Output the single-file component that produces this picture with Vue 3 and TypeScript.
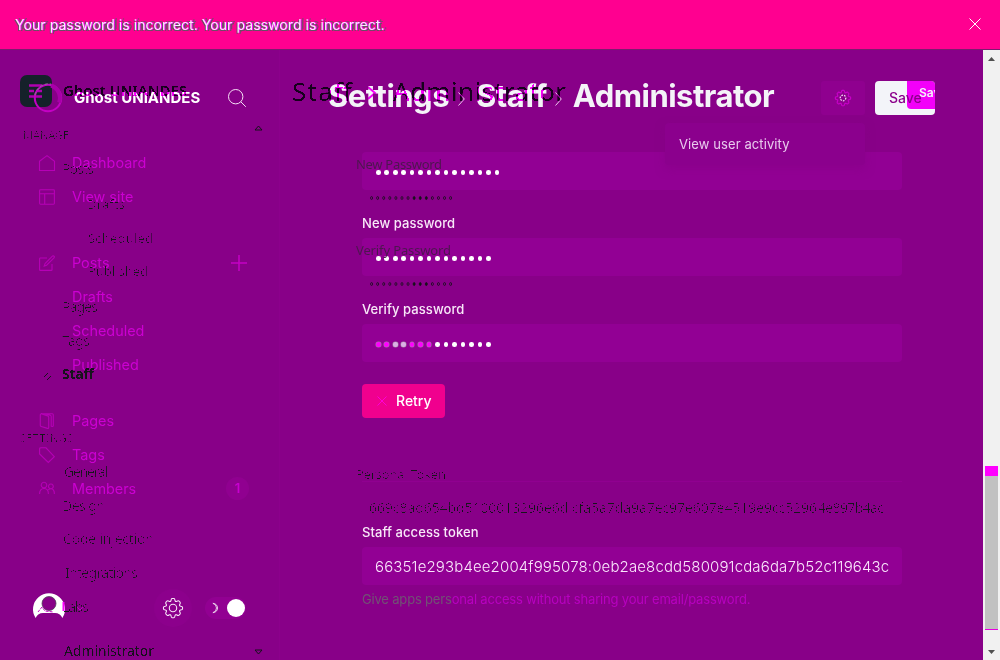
<script setup lang="ts">
interface NavItem { label: string; icon?: string; gap?: boolean; plus?: boolean; badge?: number }
interface Trace { t: string; x: number; y: number; w: number; s: number; b?: number }

const nav: NavItem[] = [
  { label: 'Dashboard', icon: 'home' },
  { label: 'View site', icon: 'layout' },
  { label: 'Posts', icon: 'edit', gap: true, plus: true },
  { label: 'Drafts' },
  { label: 'Scheduled' },
  { label: 'Published' },
  { label: 'Pages', icon: 'pages', gap: true },
  { label: 'Tags', icon: 'tag' },
  { label: 'Members', icon: 'members', badge: 1 },
]

const traces: Trace[] = [
  { t: 'MANAGE', x: 23, y: 139, w: 46, s: 11 },
  { t: 'Posts', x: 62, y: 174, w: 32, s: 14 },
  { t: 'Drafts', x: 87, y: 209, w: 38, s: 13 },
  { t: 'Scheduled', x: 88, y: 243, w: 65, s: 13 },
  { t: 'Published', x: 88, y: 276, w: 60, s: 13 },
  { t: 'Pages', x: 62, y: 312, w: 36, s: 14 },
  { t: 'Tags', x: 62, y: 346, w: 28, s: 14 },
  { t: 'SETTINGS', x: 20, y: 442, w: 53, s: 11 },
  { t: 'General', x: 64, y: 477, w: 44, s: 14 },
  { t: 'Design', x: 62, y: 511, w: 43, s: 14 },
  { t: 'Code injection', x: 63, y: 544, w: 91, s: 14 },
  { t: 'Integrations', x: 65, y: 578, w: 73, s: 14 },
  { t: 'Labs', x: 62, y: 612, w: 27, s: 14 },
  { t: 'Personal Token', x: 356, y: 479, w: 90, s: 13 },
  { t: '669c8ad654bd5100013296e6d:cfa5a7da9a7ec97e607e4519e9cc5296', x: 369, y: 513, w: 448, s: 14 },
  { t: '4e897b4ac', x: 818, y: 513, w: 66, s: 14 },
]

const headings: Trace[] = [
  { t: 'Ghost UNIANDES', x: 63, y: 96, w: 124, s: 15, b: 600 },
  { t: 'Staff', x: 292, y: 101, w: 60, s: 26 },
  { t: 'Administrator', x: 393, y: 101, w: 173, s: 26 },
]
</script>

<template>
  <div class="screen">
    <div class="alert">
      <span class="alert-text">Your password is incorrect. Your password is incorrect.</span>
      <svg class="close" viewBox="0 0 12 12"><path d="M.5.5l11 11M11.5.5l-11 11" /></svg>
    </div>

    <div class="body">
      <aside>
        <div class="brand">
          <svg class="logo" viewBox="0 0 48 44">
            <rect x="0" y="0" width="32" height="32" rx="7" fill="#15212a" />
            <path d="M9 10.500h13M9 16h5M16 16h6M9 21.500h13" stroke="#b000b0" stroke-width="2.500" fill="none" />
            <circle cx="28" cy="23" r="13.200" stroke="#c400c4" stroke-width="2" fill="none" />
            <path d="M31 10.500a13 13 0 0 1 8 17" stroke="#a800a8" stroke-width="4" fill="none" />
            <path d="M15 20a14 14 0 0 1 16-11" stroke="#83808b" stroke-width="1" stroke-dasharray="3 2" fill="none" />
          </svg>
          <span class="brand-name">Ghost UNIANDES</span>
          <svg class="search" viewBox="0 0 18 18"><circle cx="7.7" cy="7.7" r="7.2" /><path d="M12.8 12.8l5 5" /></svg>
        </div>

        <nav>
          <div v-for="n in nav" :key="n.label" class="row" :class="{ gap: n.gap }">
            <svg class="icon" viewBox="0 0 16 16">
              <path v-if="n.icon === 'home'" d="M.5 6.2L8 .6l7.5 5.6v9.3H.5z" />
              <path v-else-if="n.icon === 'layout'" d="M1.5.8h13q.9 0 .9.9v12.6q0 .9-.9.9h-13q-.9 0-.9-.9V1.700q0-.9.9-.9zM.6 4.700h14.800M5.700 4.700v10.500" />
              <path v-else-if="n.icon === 'edit'" d="M8 3H1.300q-.7 0-.7.7v11q0 .7.7.7h11q.7 0 .7-.7V9M6 8.700L13.400 1.200q.8-.8 1.600 0t0 1.600L7.600 10.200l-2.400.8z" />
              <path v-else-if="n.icon === 'pages'" d="M12.300 13.500h1q1 0 1-1V1.700q0-1-1-1h-11q-1 0-1 1v10.500q0 1 1 1.300l6.200 1.900q1.200.3 1.200-1V4.200q0-1-1-1.300L2 .8M6 .7l5 1.400q1.200.4 1.200 1.500v10" />
              <path v-else-if="n.icon === 'tag'" d="M.6 2v5l8.700 8.400 6-5.700L7 .8 2 .7Q.6.700.6 2z" />
              <path v-else-if="n.icon === 'members'" d="M5 1.300a2.800 2.800 0 1 0 .01 0zM11.900 3a2.400 2.400 0 1 0 .01 0zM.6 13q0-5.500 4.500-5.500 4.300 0 4.300 5.500M9.300 8.900q1-1.200 2.600-1.200 3.500 0 3.500 5.300" />
            </svg>
            <span class="label">{{ n.label }}</span>
            <svg v-if="n.plus" class="plus" viewBox="0 0 16 16"><path d="M8 0v16M0 8h16" /></svg>
            <span v-if="n.badge" class="badge">{{ n.badge }}</span>
          </div>
        </nav>

        <div class="foot">
          <svg class="avatar" viewBox="0 0 32 32">
            <path d="M2.600 26A16 16 0 1 1 29.400 26Q27 21 22 21H10Q5 21 2.600 26z" fill="#fff" />
            <circle cx="16" cy="11.500" r="7" fill="#880088" stroke="#52405c" stroke-width=".8" />
            <path d="M5 20l4-5 3 4 8 1" stroke="#c800c8" stroke-dasharray="3 1" fill="none" />
            <path d="M30.500 10v9" stroke="#f0f" stroke-width="2" />
          </svg>
          <svg class="chev" viewBox="0 0 10 6"><path d="M.5.500L5 5 9.500.500" /></svg>
          <span class="gear-wrap">
            <svg class="gear" viewBox="0 0 20 20">
              <path d="M8 2.500Q8.300.5 9 .5h2q.7 0 1 2l.5.900 1 .1q1.700-1.100 2.300-.6l1.400 1.400q.5.600-.6 2.300v1l1 .6q1.900.2 1.900 1v1.800q0 .7-1.900 1l-1 .6v1q1.100 1.700.6 2.300l-1.400 1.400q-.6.500-2.300-.6l-1 .1-.5.900q-.3 2-1 2H9q-.7 0-1-2l-.5-.9-1-.1q-1.700 1.100-2.300.6l-1.400-1.400q-.5-.6.600-2.300v-1l-1-.6Q.5 11.700.5 11V9.200q0-.8 1.900-1l1-.6v-1Q2.300 4.900 2.800 4.300l1.400-1.400q.6-.5 2.300.6l1-.1z" />
              <circle cx="10" cy="10" r="3.700" />
            </svg>
          </span>
          <span class="toggle">
            <svg class="moon" viewBox="0 0 10 12"><path d="M1 .800a5.200 5.200 0 1 1 0 10.400Q5 10 5 6T1 .800z" /></svg>
            <i class="knob"></i>
          </span>
        </div>
      </aside>

      <main>
        <header>
          <h1>
            <span>Settings</span>
            <svg class="sep" viewBox="0 0 7 14"><path d="M.5.500L6.300 7 .5 13.500" /></svg>
            <span>Staff</span>
            <svg class="sep second" viewBox="0 0 7 14"><path d="M.5.500L6.300 7 .5 13.500" /></svg>
            <span>Administrator</span>
          </h1>
          <div class="actions">
            <div class="gear-btn">
              <svg class="gear small" viewBox="0 0 20 20">
                <path d="M8 2.500Q8.300.5 9 .5h2q.7 0 1 2l.5.900 1 .1q1.700-1.100 2.300-.6l1.400 1.400q.5.600-.6 2.300v1l1 .6q1.900.2 1.900 1v1.800q0 .7-1.900 1l-1 .6v1q1.100 1.700.6 2.300l-1.400 1.400q-.6.500-2.300-.6l-1 .1-.5.900q-.3 2-1 2H9q-.7 0-1-2l-.5-.9-1-.1q-1.700 1.100-2.300.6l-1.400-1.400q-.5-.6.600-2.300v-1l-1-.6Q.5 11.700.5 11V9.200q0-.8 1.900-1l1-.6v-1Q2.300 4.900 2.800 4.300l1.400-1.400q.6-.5 2.300.6l1-.1z" />
                <circle class="hub" cx="10" cy="10" r="3.500" />
              </svg>
              <div class="menu">View user activity</div>
            </div>
            <div class="save">Save<span class="save-over">Save</span></div>
          </div>
        </header>

        <section>
          <div class="input dots first"><i v-for="i in 15" :key="i"></i></div>
          <label>New password</label>
          <div class="input dots"><i v-for="i in 14" :key="i"></i></div>
          <label>Verify password</label>
          <div class="input dots worn"><i v-for="i in 14" :key="i"></i></div>
          <button>
            <svg viewBox="0 0 10 10"><path d="M.5.500l9 9M9.500.500l-9 9" /></svg>
            <span>Retry</span>
          </button>
          <hr />
          <label class="token-label">Staff access token</label>
          <div class="input"><span class="token">66351e293b4ee2004f995078:0eb2ae8cdd580091cda6da7b52c119643cd</span></div>
          <p><span class="dim">Give apps pers</span>onal access without sharing your email/password.</p>
        </section>
      </main>

      <div class="scroll">
        <svg viewBox="0 0 7 4"><path d="M0 4L3.500 0 7 4z" /></svg>
        <div class="thumb"></div>
        <svg viewBox="0 0 7 4"><path d="M0 0h7L3.500 4z" /></svg>
      </div>
    </div>

    <svg class="traces" viewBox="0 0 1000 660" width="1000" height="660">
      <defs>
        <filter id="crisp" filterUnits="userSpaceOnUse" x="0" y="0" width="1000" height="660">
          <feComponentTransfer><feFuncA type="linear" slope="9" intercept="-7.300" /></feComponentTransfer>
        </filter>
        <filter id="softer" filterUnits="userSpaceOnUse" x="0" y="0" width="1000" height="660">
          <feComponentTransfer><feFuncA type="linear" slope="6" intercept="-2.600" /></feComponentTransfer>
        </filter>
      </defs>
      <g filter="url(#crisp)">
        <text v-for="(g, i) in traces" :key="i" :x="g.x" :y="g.y" :font-size="g.s" :textLength="g.w">{{ g.t }}</text>
      </g>
      <g filter="url(#softer)">
        <text v-for="h in headings" :key="h.t" :x="h.x" :y="h.y" :font-size="h.s" :font-weight="h.b ?? 400" :textLength="h.w">{{ h.t }}</text>
        <text x="62" y="379" font-size="14" font-weight="700" textLength="32">Staff</text>
        <text x="64" y="656" font-size="14" textLength="90">Administrator</text>
      </g>
      <g class="faint">
        <text x="356" y="169" font-size="13" textLength="86">New Password</text>
        <text x="356" y="255" font-size="13" textLength="95">Verify Password</text>
      </g>
      <g class="masked">
        <template v-for="y in [198, 284]" :key="y">
          <ellipse v-for="i in 14" :key="i" :class="{ solid: i > 7 && i < 11 }" :cx="365.500 + i * 6.080" :cy="y" rx="1" ry="1.500" />
        </template>
      </g>
      <path class="carets" d="M255 130l3.500-4 3.500 4zM255 650h7l-3.500 4zM44 377l4-4M47 380l4-4" />
    </svg>
    <svg class="traces tint" viewBox="0 0 1000 660" width="1000" height="660" aria-hidden="true">
      <g filter="url(#softer)">
        <text v-for="h in headings" :key="h.t" :x="h.x" :y="h.y" :font-size="h.s" :font-weight="h.b ?? 400" :textLength="h.w">{{ h.t }}</text>
      </g>
      <path d="M368 87l7 6-7 6" />
    </svg>
  </div>
</template>

<style>
html, body { margin: 0; overflow: hidden; }
</style>

<style scoped>
* { box-sizing: border-box; }
.screen { position: relative; width: 1000px; height: 660px; overflow: hidden; background: #880088; font-family: Inter, "Liberation Sans", sans-serif; display: flex; flex-direction: column; }
svg { fill: none; overflow: visible; flex: none; }
.alert { height: 50px; flex: none; background: #ff0090; display: flex; align-items: center; justify-content: space-between; padding: 0 19px 1px 15px; border-bottom: 1px solid #7c1a70; }
.alert-text { font-size: 14px; font-weight: 400; color: #ffe8ff; text-shadow: 1px 0 0 #f0f, 2px 1px 0 #675064, -1px 1px 0 #675064, 3px -1px 0 #8a4070; letter-spacing: .07px; }
.close { width: 12px; height: 12px; stroke: #fff; stroke-width: 1; }
.body { flex: 1; display: flex; min-height: 0; }
aside { width: 280px; border-right: 1px solid #8c008c; display: flex; flex-direction: column; flex: none; }
.brand { display: flex; align-items: center; height: 95px; padding: 0 33px 0 20px; }
.logo { width: 48px; height: 44px; margin-top: -1px; }
.brand-name { position: relative; z-index: 1; flex: 1; margin-left: 6px; color: #fff; font-weight: 700; font-size: 15px; letter-spacing: 0; white-space: nowrap; }
.search { width: 18px; height: 18px; stroke: #f5dff5; stroke-width: 1; margin-top: 1px; }
nav { display: flex; flex-direction: column; }
.row { display: flex; align-items: center; height: 34px; padding: 0 31px 0 39px; }
.row.gap { margin-top: 32px; }
.row.gap:nth-child(7) { margin-top: 22px; }
.icon { width: 16px; height: 16px; stroke: #b600b6; stroke-width: 1.1; margin-top: 2px; }
.label { flex: 1; margin-left: 17px; color: #cc00d2; font-size: 14.400px; font-weight: 400; }
.plus { width: 16px; height: 16px; stroke: #c400c4; stroke-width: 1.500; margin-right: 1px; margin-top: 2px; }
.badge { width: 23px; height: 23px; border-radius: 50%; background: #900090; color: #c800d0; font-size: 13px; font-weight: 600; display: grid; place-items: center; margin-right: -1px; }
.foot { margin-top: auto; height: 104px; display: flex; align-items: center; padding: 0 32px 0 33px; }
.avatar { width: 32px; height: 32px; margin-top: 0; }
.chev { width: 10px; height: 6px; margin-left: 10px; stroke: #c000c0; }
.gear-wrap { width: 38px; height: 38px; border-radius: 50%; background: #8c008c; margin-left: 69px; display: grid; place-items: center; }
.gear { width: 20px; height: 20px; stroke: #f6e4f6; stroke-width: 1.1; }
.gear.small { width: 16px; height: 16px; stroke: #c800c8; stroke-width: 1.500; }
.gear .hub { stroke: #f5dff5; stroke-dasharray: 2 1.500; }
.toggle { width: 41px; height: 22px; border-radius: 11px; background: #920092; margin-left: 13px; flex: none; display: flex; align-items: center; justify-content: space-between; padding: 0 1px 0 7px; }
.moon { width: 9px; height: 12px; stroke: #eedcee; }
.knob { width: 18px; height: 18px; border-radius: 50%; background: #fff; }
main { width: 703px; flex: none; padding-left: 48px; }
header { display: flex; justify-content: space-between; height: 102px; padding: 31px 48px 0 0; }
h1 { position: relative; z-index: 1; margin: -2px 0 0; height: 32px; display: flex; align-items: center; font-size: 31px; font-weight: 700; letter-spacing: -.5px; color: #f4f3f8; white-space: nowrap; }
.sep { width: 7px; height: 14px; stroke: #eec8ee; margin: 7px 11px 0 9px; }
.second { margin: 7px 11px 0 8px; }
.actions { display: flex; gap: 10px; }
.gear-btn { position: relative; width: 44px; height: 34px; border-radius: 3px; background: #8f008f; display: grid; place-items: center; }
.menu { position: absolute; top: 42px; right: 0; width: 200px; height: 42px; border-radius: 4px; background: #8b008d; box-shadow: 0 4px 10px rgba(134, 0, 134, .5); color: #e9cbee; font-size: 13px; line-height: 43px; padding-left: 14px; letter-spacing: .1px; }
.save { position: relative; width: 60px; height: 34px; border-radius: 4px; background: #f3f4f9; color: #8b008b; font-size: 14px; font-weight: 500; line-height: 34px; padding-left: 14px; overflow: hidden; }
.save-over { position: absolute; left: 32px; top: 0; width: 28px; height: 28px; background: #f0f; color: #fff; font-size: 12px; line-height: 24px; font-weight: 600; padding-left: 12px; border-radius: 0 0 0 4px; overflow: hidden; mix-blend-mode: multiply; }
section { width: 540px; margin-left: 34px; display: flex; flex-direction: column; }
.input { height: 38px; flex: none; border-radius: 4px; background: #920094; padding: 0 13px; display: flex; align-items: center; }
.dots { padding: 3px 0 0 14px; }
.dots i { width: 4.600px; height: 4.600px; margin-right: 3.880px; border-radius: 50%; background: #fff; }
.worn i:nth-child(-n+7) { background: #f0f; box-shadow: 0 0 0 .5px #9a849d; }
.worn i:nth-child(3), .worn i:nth-child(4) { background: #dcb0e6; }
label { height: 48px; line-height: 67px; color: #f8e8f8; font-size: 13px; font-weight: 500; letter-spacing: .08px; }
button { margin-top: 22px; width: 83px; height: 34px; border: 0; border-radius: 4px; background: #f0008e; color: #fff; font: 500 14px/32px Inter, sans-serif; padding: 0 0 0 15px; display: flex; align-items: center; gap: 9px; }
button svg { width: 10px; height: 10px; stroke: #ff00d8; }
hr { width: 100%; border: 0; height: 1px; margin: 63px 0 0; background: #900090; }
.token-label { height: 65px; line-height: 101px; }
.token { display: block; width: 514px; overflow: hidden; white-space: nowrap; color: #fae6fc; font-size: 15px; font-weight: 300; line-height: 24px; padding-top: 2px; letter-spacing: .14px; }
p { margin: 6px 0 0; font-size: 13px; line-height: 16px; color: #b800c0; letter-spacing: -.18px; white-space: nowrap; }
.dim { color: #715274; }
.scroll { width: 17px; background: #f1f1f1; display: flex; flex-direction: column; align-items: center; padding: 7px 0 6px; }
.scroll svg { width: 7px; height: 4px; fill: #505050; }
.thumb { width: 13px; height: 164px; margin: 405px 0 auto; flex: none; background: #c1c1c1; border-top: 10px solid #f0f; border-bottom: 1px solid #e800e0; }
.traces { position: absolute; left: 0; top: 0; pointer-events: none; }
.traces text { fill: #16121b; font-family: "Noto Sans", "Open Sans", sans-serif; }
.traces .faint text { fill: #4d164f; }
.tint { z-index: 2; mix-blend-mode: multiply; }
.traces.tint text { fill: #f0f; }
.tint path { stroke: #f0f; stroke-width: 2; }
.masked ellipse { stroke: #16121b; stroke-width: .8; }
.masked .solid { fill: #16121b; }
.carets { stroke: #16121b; stroke-width: 1; }
</style>
